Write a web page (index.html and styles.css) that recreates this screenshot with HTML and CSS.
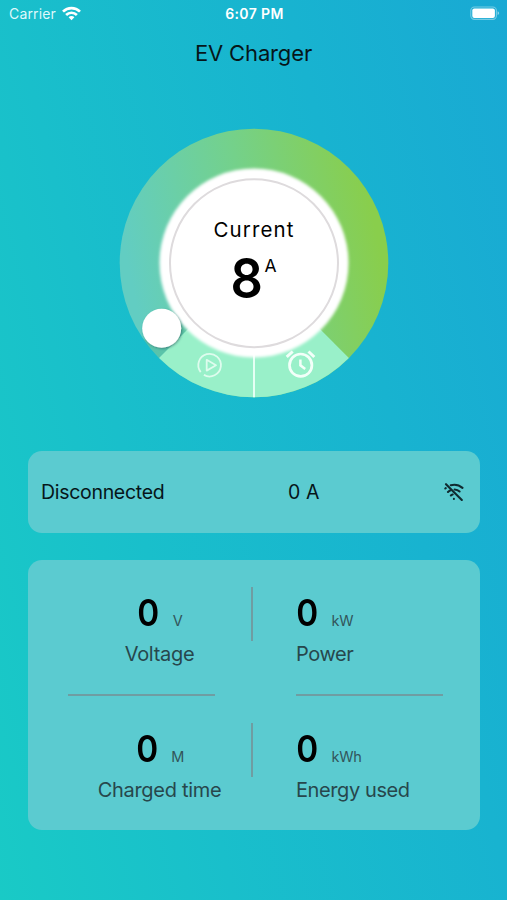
FILE: index.html
```html
<!DOCTYPE html>
<html lang="en">
<head>
<meta charset="utf-8">
<title>EV Charger</title>
<link rel="stylesheet" href="styles.css">
</head>
<body>
<div class="screen">
  <div class="status">
    <div class="carrier"><span>Carrier</span>
      <svg width="19" height="15" viewBox="0 0 19 15" fill="none" stroke="#fff" stroke-width="2.7"><path d="M1 5.6C5.8 .9 13.2 .9 18 5.6"/><path d="M4.1 9C7.2 6 11.8 6 14.9 9"/><path d="M9.5 14.2L6.6 11.3C8.2 9.7 10.8 9.7 12.4 11.3Z" fill="#fff" stroke="none"/></svg>
    </div>
    <div class="time">6:07 PM</div>
    <svg class="battery" width="30" height="15" viewBox="0 0 30 15"><rect x=".8" y="1" width="25.6" height="12.4" rx="3.6" fill="none" stroke="#fff" stroke-opacity=".4" stroke-width="1.1"/><rect x="2.3" y="2.5" width="22.6" height="9.4" rx="2" fill="#fff"/><path d="M27.6 5.3C29.6 6 29.6 8.4 27.6 9.1Z" fill="#fff" opacity=".5"/></svg>
  </div>
  <h1 class="title">EV Charger</h1>
  <div class="dial">
    <svg class="ring" width="280" height="280" viewBox="114 123 280 280">
      <defs>
        <linearGradient id="arc" gradientUnits="userSpaceOnUse" x1="135" y1="300" x2="380" y2="250"><stop offset="0" stop-color="#62cdc2"/><stop offset=".5" stop-color="#74d18b"/><stop offset="1" stop-color="#89ce4c"/></linearGradient>
        <filter id="soft" x="-20%" y="-20%" width="140%" height="140%"><feGaussianBlur stdDeviation="1.6"/></filter>
        <filter id="shade" x="-30%" y="-30%" width="170%" height="170%"><feDropShadow dx="1" dy="1" stdDeviation="1" flood-color="#245" flood-opacity=".5"/></filter>
      </defs>
      <circle cx="254" cy="263" r="134.3" fill="url(#arc)"/>
      <path d="M254 263L159 358A134.3 134.3 0 0 1 144 340Z" fill="#4db795" opacity=".45"/>
      <path d="M254 263L159.1 358A134.3 134.3 0 0 0 348.9 358Z" fill="#99f0c9"/>
      <path d="M254 350V397.3" stroke="#e4fff4" stroke-width="2"/>
      <circle cx="254" cy="263" r="94.5" fill="#fff" filter="url(#soft)"/>
      <circle cx="254" cy="263.2" r="84" fill="#fff" stroke="#dedbdd" stroke-width="2"/>
      <circle cx="161.7" cy="328.3" r="19.5" fill="#fff" filter="url(#shade)"/>
      <g fill="none" stroke="#defcee" stroke-width="1.8"><path d="M200.7 372.1A11.3 11.3 0 1 1 203.9 374.9"/><path d="M206.7 359.8L216 365.2L206.7 370.6Z" stroke-linejoin="round"/></g>
      <g fill="none" stroke="#f2fff9" stroke-width="2.7"><circle cx="300.7" cy="365.2" r="11.2"/><path d="M300.4 359.6V365.3L305.2 369" stroke-width="2.5"/><path d="M286.7 356.9L292.7 351.5M308.5 351.5L314.3 357" stroke-width="3"/></g>
    </svg>
    <div class="reading">
      <div class="caption">Current</div>
      <div class="amps"><b>8</b><sup>A</sup></div>
    </div>
  </div>
  <div class="card link">
    <span class="state">Disconnected</span>
    <span class="load">0 A</span>
    <svg width="20" height="18" viewBox="0 0 20 18" fill="none" stroke="#102a30" stroke-width="2.1" stroke-linecap="round"><path d="M6.8 2.2C11.2 1 15.4 2.2 18.5 4.9"/><path d="M10.6 6.5C12.6 6.6 14.2 7.2 15.6 8.5"/><path d="M1.3 5.5L1.7 5.2M4 9C4.7 8.3 5.4 7.8 6.2 7.5M6.9 12.5C7.4 12 8 11.7 8.7 11.5M9.9 15.9V16"/><path d="M2 1.2L17.8 17"/></svg>
  </div>
  <div class="card stats">
    <div class="row">
      <div class="stat left"><div class="value"><b>0</b><span>V</span></div><div class="label">Voltage</div></div>
      <i class="vline"></i>
      <div class="stat"><div class="value"><b>0</b><span>kW</span></div><div class="label">Power</div></div>
    </div>
    <div class="rules"><i></i><i></i></div>
    <div class="row">
      <div class="stat left"><div class="value"><b>0</b><span>M</span></div><div class="label">Charged time</div></div>
      <i class="vline"></i>
      <div class="stat"><div class="value"><b>0</b><span>kWh</span></div><div class="label">Energy used</div></div>
    </div>
  </div>
</div>
</body>
</html>
```
FILE: styles.css
```css
* { box-sizing: border-box; }
body { margin: 0; font-family: Inter, "Liberation Sans", sans-serif; color: #06161a; }
.screen { height: 900px; overflow: hidden; background: linear-gradient(76deg, #19cac6 0%, #19bfcb 32%, #18b3d0 70%, #19a9d4 100%); }
.status { height: 27px; padding: 0 7px 0 9px; display: grid; grid-template-columns: 1fr auto 1fr; align-items: center; color: #fff; font-size: 14px; }
.carrier { display: flex; align-items: center; gap: 6px; letter-spacing: .15px; color: #dff8fb; }
.carrier svg { margin-top: -1px; }
.time { font-weight: 600; letter-spacing: .4px; }
.battery { justify-self: end; }
.title { margin: 12px 0 0; font-size: 22px; line-height: 28px; font-weight: 400; text-align: center; letter-spacing: -.15px; }
.dial { width: 280px; height: 280px; margin: 56px auto 0 114px; display: grid; }
.ring, .reading { grid-area: 1 / 1; }
.ring { display: block; }
.reading { display: flex; flex-direction: column; align-items: center; padding-top: 93px; color: #000; z-index: 1; }
.caption { font-size: 20.5px; line-height: 28px; letter-spacing: 1.1px; }
.amps { display: flex; align-items: flex-start; height: 68px; margin-left: -2px; }
.amps b { font-size: 55px; line-height: 68px; font-weight: 600; transform: scaleX(.92); }
.amps sup { font-size: 17.5px; line-height: 22px; margin-top: 11px; }
.card { width: 452px; margin-left: 28px; border-radius: 14px; background: #5bcbd0; }
.link { height: 82px; margin-top: 48px; padding: 0 16px 0 13px; display: grid; grid-template-columns: 247px 1fr auto; align-items: center; font-size: 19.5px; }
.state { letter-spacing: -.3px; }
.load { letter-spacing: .1px; }
.stats { height: 270px; margin-top: 27px; padding-top: 27px; }
.row { height: 107px; display: grid; grid-template-columns: 223px 2px 1fr; }
.vline { height: 54px; background: #6f9da2; }
.stat { padding: 3px 0 0 42px; }
.stat.left { padding: 3px 0 0 40px; display: flex; flex-direction: column; align-items: center; }
.value { display: flex; align-items: baseline; gap: 12px; height: 50px; }
.value b { font-size: 37px; line-height: 46px; font-weight: 600; color: #000; transform: scaleX(.9); }
.value span { font-size: 14.5px; color: #32555a; letter-spacing: -.2px; }
.label { font-size: 20px; line-height: 28px; letter-spacing: -.4px; color: #27474c; padding-left: 1px; }
.stat.left .label { padding-left: 0; letter-spacing: -.3px; }
.rules { height: 2px; margin-bottom: 27px; padding: 0 37px 0 40px; display: flex; justify-content: space-between; }
.rules i { width: 147px; background: #6f9da2; }
```
